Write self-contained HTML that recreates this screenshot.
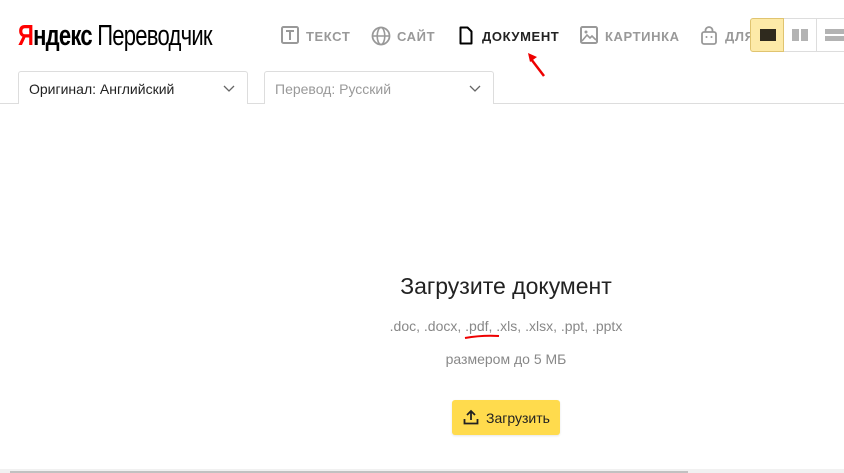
<!DOCTYPE html>
<html><head><meta charset="utf-8">
<style>
*{margin:0;padding:0;box-sizing:border-box}
body{width:844px;height:473px;overflow:hidden;background:#fff;font-family:"Liberation Sans",Arial,sans-serif;position:relative}
.abs{position:absolute}
.logo{left:18px;top:20px;font-size:29px;letter-spacing:-1px;color:#000;white-space:nowrap;transform:scaleX(0.76);transform-origin:left}
.logo .y{color:#f00}
.nav{top:29px;font-size:13px;font-weight:bold;letter-spacing:0.6px;color:#999;white-space:nowrap}
.nav svg{position:absolute;top:-3px}
.nav span{position:absolute;top:0}
.sel{top:71px;height:33px;border:1px solid #ddd;border-bottom:none;border-radius:3px 3px 0 0;font-size:14px;padding:9px 10px}
.chev{position:absolute;right:12px;top:13px}
.line{left:0;top:103px;width:844px;height:1px;background:#ddd}
</style></head><body>
<div class="abs logo"><b><span class="y">Я</span>ндекс</b> <span>Переводчик</span></div>

<div class="abs nav" style="left:281px;width:80px">
<svg width="18" height="18" viewBox="0 0 18 18"><rect x="1" y="1" width="16" height="16" rx="1.5" fill="none" stroke="#999" stroke-width="2"/><path d="M5 5h8M9 5v9" stroke="#999" stroke-width="2"/></svg>
<span style="left:25px">ТЕКСТ</span></div>
<div class="abs nav" style="left:371px;width:80px">
<svg width="20" height="20" viewBox="0 0 20 20"><circle cx="10" cy="10" r="8.5" fill="none" stroke="#999" stroke-width="1.8"/><ellipse cx="10" cy="10" rx="3.8" ry="8.5" fill="none" stroke="#999" stroke-width="1.6"/><path d="M1.5 10h17" stroke="#999" stroke-width="1.6"/></svg>
<span style="left:26px">САЙТ</span></div>
<div class="abs nav" style="left:459px;width:110px;color:#222">
<svg width="14" height="19" viewBox="0 0 14 19"><path d="M1.5 1.5h7l4 4v12h-11z" fill="none" stroke="#000" stroke-width="2" stroke-linejoin="round"/></svg>
<span style="left:23px">ДОКУМЕНТ</span></div>
<div class="abs nav" style="left:580px;width:110px">
<svg width="18" height="18" viewBox="0 0 18 18"><rect x="1" y="1" width="16" height="16" rx="1.5" fill="none" stroke="#999" stroke-width="2"/><path d="M2 15l5-6 3 3 2-2 4 4" fill="none" stroke="#999" stroke-width="1.6"/><circle cx="6" cy="6" r="1.5" fill="#999"/></svg>
<span style="left:25px">КАРТИНКА</span></div>
<div class="abs nav" style="left:701px;width:60px">
<svg width="16" height="19" viewBox="0 0 16 19"><path d="M4.5 6V4.5a3.5 3.5 0 0 1 7 0V6" fill="none" stroke="#999" stroke-width="1.8"/><rect x="1" y="6" width="14" height="12" rx="2" fill="none" stroke="#999" stroke-width="1.8"/><circle cx="5.5" cy="11" r="1" fill="#999"/><circle cx="10.5" cy="11" r="1" fill="#999"/></svg>
<span style="left:24px">ДЛЯ</span></div>

<div class="abs" style="left:750px;top:18px;width:34px;height:34px;background:#fdeaa8;border:1px solid #e0c470;border-radius:3px 0 0 3px"><div class="abs" style="left:9px;top:10px;width:16px;height:12px;background:#2f2a1e"></div></div>
<div class="abs" style="left:784px;top:18px;width:33px;height:34px;border-top:1px solid #ddd;border-bottom:1px solid #ddd;border-right:1px solid #ddd;background:#fff"><div class="abs" style="left:8px;top:10px;width:7px;height:12px;background:#b3b3b3"></div><div class="abs" style="left:17px;top:10px;width:7px;height:12px;background:#b3b3b3"></div></div>
<div class="abs" style="left:817px;top:18px;width:27px;height:34px;border-top:1px solid #ddd;border-bottom:1px solid #ddd;background:#fff"><div class="abs" style="left:8px;top:10px;width:19px;height:5px;background:#b3b3b3"></div><div class="abs" style="left:8px;top:17px;width:19px;height:5px;background:#b3b3b3"></div></div>

<svg class="abs" style="left:526px;top:51px" width="22" height="28" viewBox="0 0 22 28"><path d="M18 25L5 8" stroke="#e00" stroke-width="2.5"/><path d="M2 2l9 4-7 5z" fill="#e00"/></svg>

<div class="abs line"></div>
<div class="abs sel" style="left:18px;width:230px;color:#222;background:#fff">Оригинал: Английский
<svg class="chev" width="12" height="8" viewBox="0 0 12 8"><path d="M1 1l5 5 5-5" fill="none" stroke="#666" stroke-width="1.3"/></svg></div>
<div class="abs sel" style="left:264px;width:230px;color:#999;background:#fff">Перевод: Русский
<svg class="chev" width="12" height="8" viewBox="0 0 12 8"><path d="M1 1l5 5 5-5" fill="none" stroke="#666" stroke-width="1.3"/></svg></div>

<div class="abs" style="left:0;width:1012px;top:273px;text-align:center;font-size:23px;color:#222">Загрузите документ</div>
<div class="abs" style="left:0;width:1012px;top:318px;text-align:center;font-size:14px;color:#888">.doc, .docx, .pdf, .xls, .xlsx, .ppt, .pptx</div>
<svg class="abs" style="left:464px;top:334px" width="36" height="6"><path d="M1 4Q18 1 35 2" stroke="#e00" stroke-width="2" fill="none"/></svg>
<div class="abs" style="left:0;width:1012px;top:351px;text-align:center;font-size:14px;color:#888">размером до 5 МБ</div>
<div class="abs" style="left:452px;top:400px;width:108px;height:35px;background:#ffdb4d;border-radius:3px;box-shadow:0 1px 2px rgba(0,0,0,.1)">
<svg class="abs" style="left:11px;top:9px" width="16" height="16" viewBox="0 0 16 16"><path d="M8 11V2M4 6l4-4 4 4M1.5 10v4.5h13V10" fill="none" stroke="#222" stroke-width="1.8"/></svg>
<span class="abs" style="left:34px;top:10px;font-size:14px;color:#222">Загрузить</span></div>

<div class="abs" style="left:0;top:469px;width:844px;height:4px;background:#f1f1f1"></div>
<div class="abs" style="left:10px;top:471px;width:678px;height:2px;background:#c1c1c1"></div>
</body></html>
